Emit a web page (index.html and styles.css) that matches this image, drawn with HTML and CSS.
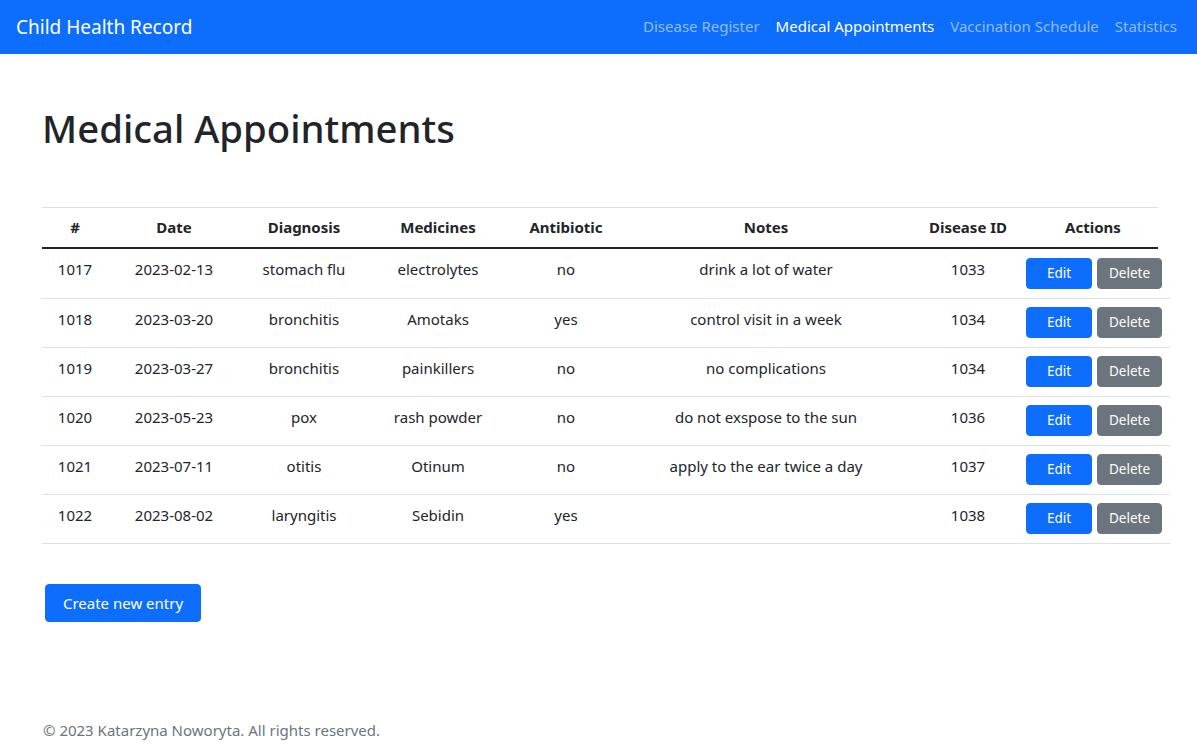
FILE: index.html
```html
<!DOCTYPE html>
<html>
<head>
<meta charset="utf-8">
<title>Child Health Record</title>
<link rel="stylesheet" href="styles.css">
</head>
<body>
<nav class="navbar">
  <a class="brand" href="#">Child Health Record</a>
  <ul class="nav">
    <li><a class="nav-link" href="#">Disease Register</a></li>
    <li><a class="nav-link active" href="#">Medical Appointments</a></li>
    <li><a class="nav-link" href="#">Vaccination Schedule</a></li>
    <li><a class="nav-link" href="#">Statistics</a></li>
  </ul>
</nav>
<main class="container">
  <h1 class="title">Medical Appointments</h1>
  <table class="table">
    <colgroup>
      <col class="c-id"><col class="c-date"><col class="c-diag"><col class="c-med"><col class="c-ab"><col class="c-notes"><col class="c-dis"><col class="c-act">
    </colgroup>
    <thead>
      <tr><th>#</th><th>Date</th><th>Diagnosis</th><th>Medicines</th><th>Antibiotic</th><th>Notes</th><th>Disease ID</th><th>Actions</th></tr>
    </thead>
    <tbody>
      <tr class="first"><td>1017</td><td>2023-02-13</td><td>stomach flu</td><td>electrolytes</td><td>no</td><td>drink a lot of water</td><td>1033</td><td class="actions"><button class="btn btn-edit">Edit</button><button class="btn btn-delete">Delete</button></td></tr>
      <tr><td>1018</td><td>2023-03-20</td><td>bronchitis</td><td>Amotaks</td><td>yes</td><td>control visit in a week</td><td>1034</td><td class="actions"><button class="btn btn-edit">Edit</button><button class="btn btn-delete">Delete</button></td></tr>
      <tr><td>1019</td><td>2023-03-27</td><td>bronchitis</td><td>painkillers</td><td>no</td><td>no complications</td><td>1034</td><td class="actions"><button class="btn btn-edit">Edit</button><button class="btn btn-delete">Delete</button></td></tr>
      <tr><td>1020</td><td>2023-05-23</td><td>pox</td><td>rash powder</td><td>no</td><td>do not exspose to the sun</td><td>1036</td><td class="actions"><button class="btn btn-edit">Edit</button><button class="btn btn-delete">Delete</button></td></tr>
      <tr><td>1021</td><td>2023-07-11</td><td>otitis</td><td>Otinum</td><td>no</td><td>apply to the ear twice a day</td><td>1037</td><td class="actions"><button class="btn btn-edit">Edit</button><button class="btn btn-delete">Delete</button></td></tr>
      <tr><td>1022</td><td>2023-08-02</td><td>laryngitis</td><td>Sebidin</td><td>yes</td><td></td><td>1038</td><td class="actions"><button class="btn btn-edit">Edit</button><button class="btn btn-delete">Delete</button></td></tr>
    </tbody>
  </table>
  <button class="btn btn-create">Create new entry</button>
</main>
<footer class="footer">© 2023 Katarzyna Noworyta. All rights reserved.</footer>
</body>
</html>
```
FILE: styles.css
```css
* { box-sizing: border-box; }
html, body { margin: 0; padding: 0; }
body {
  font-family: "Noto Sans", "Open Sans", sans-serif;
  font-size: 15px;
  line-height: 1.5;
  color: #212529;
  background: #fff;
}
.navbar {
  height: 54px;
  background: #0d6efd;
  display: flex;
  align-items: center;
  justify-content: space-between;
  padding: 0 12px 0 16px;
}
.brand {
  color: #fff;
  text-decoration: none;
  font-size: 19px;
}
.nav {
  list-style: none;
  margin: 0;
  padding: 0;
  display: flex;
}
.nav-link {
  display: block;
  padding: 7px 8px 9px;
  color: rgba(255,255,255,0.55);
  text-decoration: none;
  font-size: 15px;
}
.nav-link.active { color: #fff; }
.container {
  margin-left: 42px;
  width: 1116px;
  padding-top: 50px;
}
.title {
  margin: 0;
  font-size: 38.3px;
  font-weight: 500;
  line-height: 48px;
  height: 48px;
}
.table {
  margin-top: 55px;
  width: 1116px;
  border-collapse: collapse;
  table-layout: fixed;
  border-top: 1px solid #dee2e6;
}
.c-id { width: 66px; }
.c-date { width: 132px; }
.c-diag { width: 128px; }
.c-med { width: 140px; }
.c-ab { width: 116px; }
.c-notes { width: 284px; }
.c-dis { width: 120px; }
.c-act { width: 130px; }
th {
  font-weight: 700;
  text-align: center;
  padding: 8px 8px;
  height: 40px;
  border-bottom: 2px solid #212529;
}
td {
  text-align: center;
  padding: 9px 8px;
  border-bottom: 1px solid #dee2e6;
  vertical-align: top;
  height: 49px;
}
tr.first td { height: 50px; padding-top: 9px; }
td.actions {
  display: flex;
  gap: 5px;
  padding: 8px 8px 8px;
  width: 152px;
  margin-left: -10px;
}
tr.first td.actions { padding-top: 9px; }
.btn {
  font-family: inherit;
  border: 1px solid transparent;
  border-radius: 4px;
  color: #fff;
  cursor: pointer;
}
.btn-edit, .btn-delete {
  height: 31px;
  font-size: 13.5px;
  padding: 0;
}
.btn-edit { width: 66px; background: #0d6efd; border-color: #0d6efd; }
.btn-delete { width: 65px; background: #6c757d; border-color: #6c757d; }
.btn-create {
  margin-top: 40px;
  margin-left: 3px;
  height: 38px;
  width: 156px;
  padding: 0;
  font-size: 15px;
  background: #0d6efd;
  border-color: #0d6efd;
}
.footer {
  margin-top: 96px;
  padding-left: 43px;
  color: #6c757d;
  font-size: 15px;
  line-height: 24px;
}
```
